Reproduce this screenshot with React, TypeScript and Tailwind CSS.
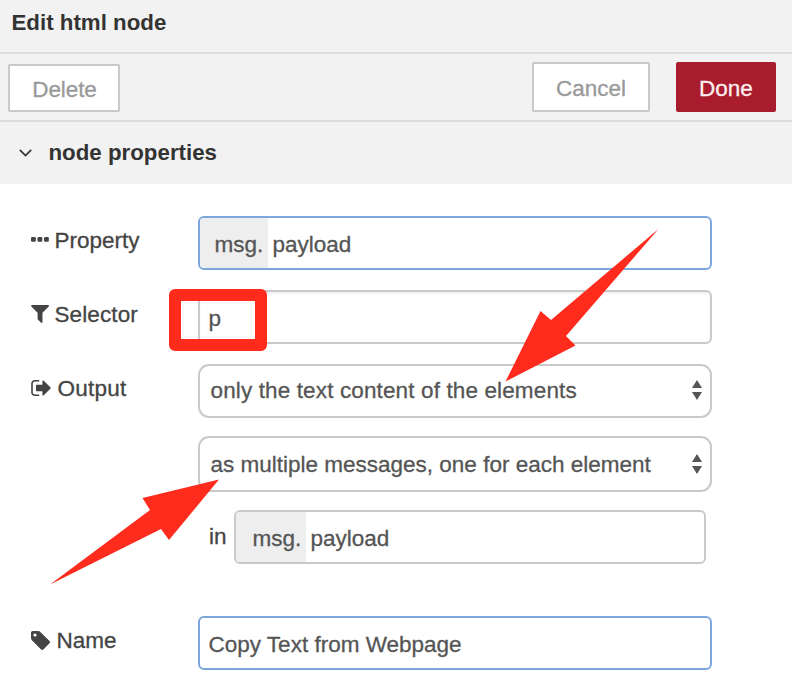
import type { ReactNode } from "react";

function EllipsisIcon() {
  return (
    <svg className="mb-[2px] h-[5px] w-[18px]" viewBox="0 0 18 5" fill="currentColor">
      <rect x="0" y="0" width="4.8" height="4.7" rx="1.2" />
      <rect x="6.5" y="0" width="4.8" height="4.7" rx="1.2" />
      <rect x="13" y="0" width="4.8" height="4.7" rx="1.2" />
    </svg>
  );
}

function FilterIcon() {
  return (
    <svg className="h-[18px] w-[18px]" viewBox="186 256 1414 1414" fill="currentColor">
      <path d="M1595 295q17 41-14 70l-493 493v742q0 42-39 59-13 5-25 5-27 0-45-19l-256-256q-19-19-19-45v-486l-493-493q-31-29-14-70 17-39 59-39h1280q42 0 59 39z" />
    </svg>
  );
}

function SignOutIcon() {
  return (
    <svg className="h-[16px] w-[20px]" viewBox="64 256 1568 1280" fill="currentColor">
      <path d="M704 1440q0 4 1 20t.5 26.5-3 23.5-10 19.5-20.5 6.5h-320q-119 0-203.5-84.5t-84.5-203.5v-704q0-119 84.5-203.5t203.5-84.5h320q13 0 22.5 9.5t9.5 22.5q0 4 1 20t.5 26.5-3 23.5-10 19.5-20.5 6.5h-320q-66 0-113 47t-47 113v704q0 66 47 113t113 47h312l11.5 1 11.5 3 8 5.5 7 9 2 13.5zm928-544q0 26-19 45l-544 544q-19 19-45 19t-45-19-19-45v-288h-448q-26 0-45-19t-19-45v-384q0-26 19-45t45-19h448v-288q0-26 19-45t45-19 45 19l544 544q19 19 19 45z" />
    </svg>
  );
}

function TagIcon() {
  return (
    <svg className="h-[19px] w-[19px]" viewBox="0 128 1515 1515" fill="currentColor">
      <path d="M448 448q0-53-37.5-90.5t-90.5-37.5-90.5 37.5-37.5 90.5 37.5 90.5 90.5 37.5 90.5-37.5 37.5-90.5zm1067 576q0 53-37 90l-491 492q-39 37-91 37-53 0-90-37l-715-716q-38-37-64.5-101t-26.5-117v-416q0-52 38-90t90-38h416q53 0 117 26.5t102 64.5l715 714q37 39 37 91z" />
    </svg>
  );
}

function SelectArrows() {
  return (
    <svg className="h-[20px] w-[10px]" viewBox="0 0 10 20" fill="#555">
      <path d="M5 0 10 8H0ZM0 12h10L5 20Z" />
    </svg>
  );
}

function Row({ label, children }: { label?: ReactNode; children: ReactNode }) {
  return (
    <div className="flex pl-[31px]">
      <div className="flex h-12 w-[167px] items-center text-[#444]">{label}</div>
      {children}
    </div>
  );
}

function Select({ className, textClassName, children }: { className: string; textClassName: string; children: ReactNode }) {
  return (
    <div className={`flex w-[514px] items-center justify-between rounded-[11px] border-2 border-[#c9c9c9] bg-white pr-2 pl-[10.5px] ${className}`}>
      <span className={`pt-[2px] ${textClassName}`}>{children}</span>
      <SelectArrows />
    </div>
  );
}

function TypedInput({ className, children }: { className: string; children: ReactNode }) {
  return (
    <div className={`flex h-[54px] overflow-hidden rounded-[6px] border-2 bg-white ${className}`}>
      {children}
    </div>
  );
}

export default function App() {
  return (
    <div className="relative h-[698px] w-[792px] overflow-hidden bg-white font-['Liberation_Sans',Arial,sans-serif] text-[22.5px] leading-[26px] whitespace-nowrap text-[#555] [-webkit-text-stroke:0.3px_currentColor]">
      <div className="flex h-[54px] items-center border-b-2 border-[#dcdcdc] bg-[#f2f2f2] pb-[7px] pl-[11.5px] text-[22.3px] font-bold text-[#333] [-webkit-text-stroke:0]">
        Edit html node
      </div>
      <div className="flex h-[68px] border-b-2 border-[#dcdcdc] bg-[#f2f2f2] pt-2 pr-4 pl-2 text-[#999]">
        <div className="mt-[2px] flex h-12 w-28 items-center justify-center rounded-[2px] border-2 border-[#c9c9c9] bg-white pt-1 pl-[1px] tracking-[-0.1px]">
          Delete
        </div>
        <div className="ml-auto flex h-[50px] w-[118px] items-center justify-center rounded-[2px] border-2 border-[#c9c9c9] bg-white pt-1">
          Cancel
        </div>
        <div className="ml-[26px] flex h-[50px] w-[100px] items-center justify-center rounded-[2px] bg-[#a91c2d] pt-1 text-[#fdeeee]">
          Done
        </div>
      </div>
      <div className="flex h-[62px] items-center bg-[#f2f2f2] pl-[19px] text-[22.3px] font-bold text-[#333] [-webkit-text-stroke:0]">
        <svg className="mr-[16.5px] h-[8px] w-[13px]" viewBox="0 0 13 8" fill="none" stroke="#333" strokeWidth="1.7">
          <path d="M.8 .8 6.5 6.5 12.2 .8" />
        </svg>
        node properties
      </div>

      <div className="flex flex-col pt-8">
        <Row label={<><EllipsisIcon /><span className="ml-[5.5px] pt-[2px]">Property</span></>}>
          <TypedInput className="w-[514px] border-[#7ba7dc]">
            <div className="w-[68px] bg-[#eee] pt-[14px] pl-[14.5px]">msg.</div>
            <div className="pt-[14px] pl-[4.5px]">payload</div>
          </TypedInput>
        </Row>
        <div className="h-5" />
        <Row label={<><FilterIcon /><span className="ml-[5.5px] pt-[2px] tracking-[0.1px]">Selector</span></>}>
          <div className="flex h-[54px] w-[514px] items-center rounded-[6px] border-2 border-[#c9c9c9] pt-[3px] pl-[8.5px] shadow-[inset_0_2px_2px_rgba(0,0,0,0.06)]">
            p
          </div>
        </Row>
        <div className="h-5" />
        <Row label={<><SignOutIcon /><span className="ml-[6.5px] pt-[2px] tracking-[0.25px]">Output</span></>}>
          <Select className="h-[54px] pb-[2px]" textClassName="tracking-[0.13px]">
            only the text content of the elements
          </Select>
        </Row>
        <div className="h-[18px]" />
        <Row>
          <Select className="h-14" textClassName="tracking-normal">
            as multiple messages, one for each element
          </Select>
        </Row>
        <div className="h-[18px]" />
        <Row>
          <div className="flex h-[52px] w-9 items-center pt-[2px] pl-[11px] text-[#444]">in</div>
          <TypedInput className="w-[472px] border-[#c9c9c9]">
            <div className="w-[70px] bg-[#eee] pt-[14px] pl-[16.5px]">msg.</div>
            <div className="pt-[14px] pl-[4.5px]">payload</div>
          </TypedInput>
        </Row>
        <div className="h-[52px]" />
        <Row label={<><TagIcon /><span className="ml-[6.5px] pt-[2px]">Name</span></>}>
          <div className="flex h-[54px] w-[514px] items-center rounded-[6px] border-2 border-[#7ba7dc] pt-[4px] pl-[8.5px]">
            Copy Text from Webpage
          </div>
        </Row>
      </div>

      <div className="absolute top-[289px] left-[169px] h-[62px] w-[98px] rounded-[6px] border-[12px] border-[#ff2b1d]" />
      <svg className="absolute inset-0 h-[698px] w-[792px]" viewBox="0 0 792 698" fill="#ff2b1d">
        <path d="M505.5 381.5 540.5 311 551 320 658.5 229 566 336 575.5 345.5Z" />
        <path d="M219 479.5 142.5 498 150 510 50 584.5 161 529 169 540Z" />
      </svg>
    </div>
  );
}
